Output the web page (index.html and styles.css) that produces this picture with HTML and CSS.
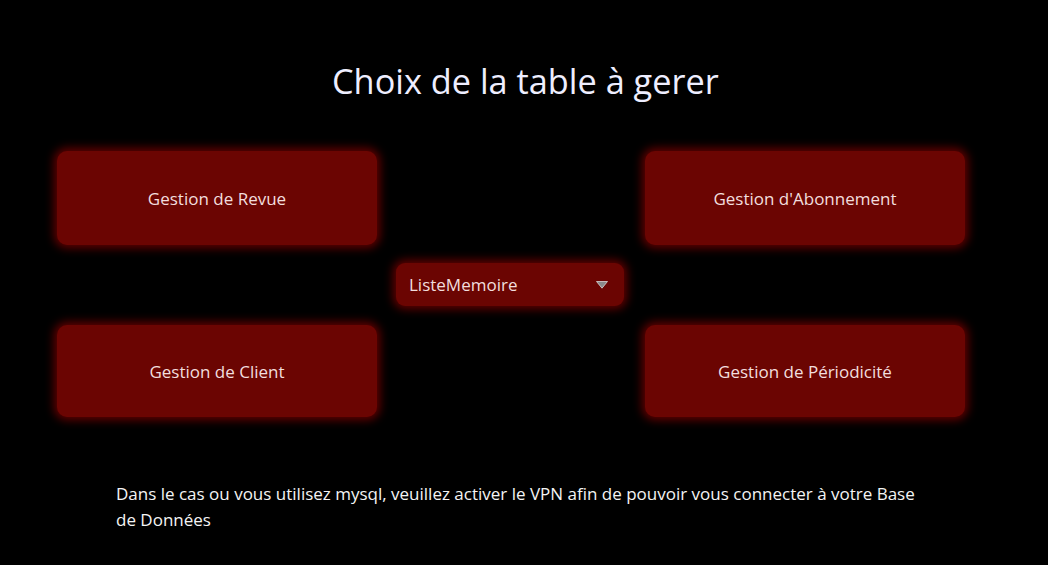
FILE: index.html
```
<!DOCTYPE html>
<html lang="fr">
<head>
<meta charset="utf-8">
<title>Choix de la table</title>
<link rel="stylesheet" href="styles.css">
</head>
<body>
<main class="window">
  <h1 class="title">Choix de la table à gerer</h1>
  <div class="grid">
    <button class="btn b1">Gestion de Revue</button>
    <button class="btn b2">Gestion d'Abonnement</button>
    <div class="combo">
      <span class="combo-text">ListeMemoire</span>
      <svg class="arrow" width="12" height="8" viewBox="0 0 12 8"><path d="M0.5 0.5 L11.5 0.5 L6 7.2 Z" fill="#8a8a8a" stroke="#d8d8d8" stroke-width="0.8"/></svg>
    </div>
    <button class="btn b3">Gestion de Client</button>
    <button class="btn b4">Gestion de Périodicité</button>
  </div>
  <p class="note">Dans le cas ou vous utilisez mysql, veuillez activer le VPN afin de pouvoir vous connecter à votre Base de Données</p>
</main>
</body>
</html>
```

FILE: styles.css
```
html, body {
  margin: 0;
  padding: 0;
  background: #000;
}
body {
  font-family: "Open Sans", "Noto Sans", sans-serif;
  color: #f2e4e4;
}
.window {
  width: 1048px;
  height: 565px;
  display: flex;
  flex-direction: column;
  padding: 0 0 0 57px;
  box-sizing: border-box;
}
.title {
  margin: 57px 0 0 275px;
  font-weight: 400;
  font-size: 34.3px;
  line-height: 48px;
  color: #eeeeff;
  width: 385px;
  text-align: center;
  white-space: nowrap;
}
.grid {
  margin-top: 46px;
  width: 908px;
  display: grid;
  grid-template-columns: 320px 1fr 320px;
  grid-template-rows: 94px 44px 92px;
  row-gap: 18px;
}
.btn {
  font: inherit;
  font-size: 17px;
  color: #f2dede;
  background: #6b0502;
  border: none;
  border-radius: 10px;
  box-shadow: 0 0 10px 3px rgba(125, 0, 0, 0.8);
  padding: 0;
}
.b1 { grid-column: 1; grid-row: 1; }
.b2 { grid-column: 3; grid-row: 1; }
.b3 { grid-column: 1; grid-row: 3; }
.b4 { grid-column: 3; grid-row: 3; }
.combo {
  grid-column: 2;
  grid-row: 2;
  justify-self: center;
  align-self: start;
  height: 43px;
  width: 228px;
  margin-left: -2px;
  background: #6b0502;
  border-radius: 9px;
  box-shadow: 0 0 10px 3px rgba(125, 0, 0, 0.8);
  display: flex;
  align-items: center;
  justify-content: space-between;
  padding: 0 16px 0 13px;
  box-sizing: border-box;
  font-size: 17px;
  color: #f2dede;
}
.arrow { display: block; margin-top: 1px; }
.note {
  margin: 64px 0 0 59px;
  width: 815px;
  font-size: 17px;
  line-height: 26px;
  color: #f4f4f4;
}
```
